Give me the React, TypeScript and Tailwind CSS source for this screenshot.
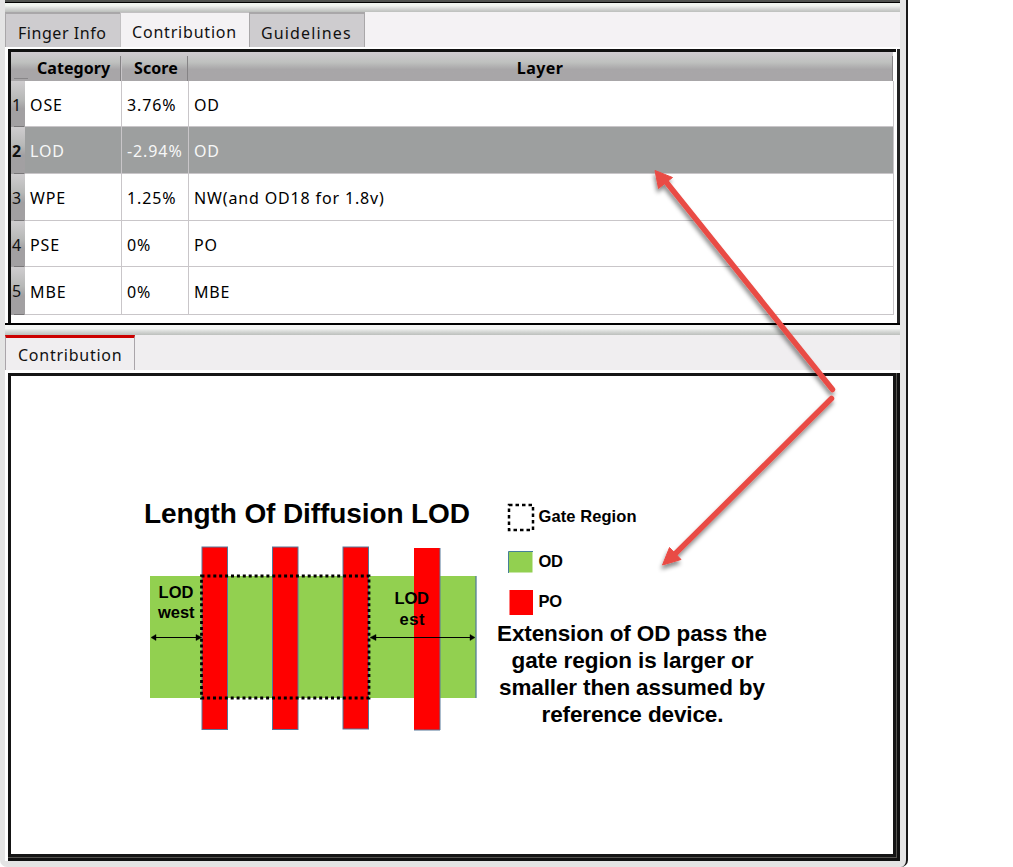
import React from "react";

type Row = { id: number; category: string; score: string; layer: string };

const rows: Row[] = [
  { id: 1, category: "OSE", score: "3.76%", layer: "OD" },
  { id: 2, category: "LOD", score: "-2.94%", layer: "OD" },
  { id: 3, category: "WPE", score: "1.25%", layer: "NW(and OD18 for 1.8v)" },
  { id: 4, category: "PSE", score: "0%", layer: "PO" },
  { id: 5, category: "MBE", score: "0%", layer: "MBE" },
];

const heights = ["h-[46px]", "h-[47px]", "h-[47px]", "h-[46px]", "h-[48px]"];

function Splitter() {
  return <div className="h-[6px] bg-linear-to-b from-[#edefed] via-[#d3d5d3] to-[#bcbfbc]" />;
}

function TopTabs() {
  return (
    <div className="flex h-[35px] bg-[#f4f2f4] text-[16px] leading-[22px]">
      <div className="w-[115px] border-t-2 border-l border-[#a9a7a9] bg-[#cecccf] pt-[8px] pl-[12px] tracking-[0.55px] whitespace-nowrap">Finger Info</div>
      <div className="w-[129px] border-t border-l border-[#c2c0c2] pt-[8px] pl-[11px] tracking-[0.8px]">Contribution</div>
      <div className="w-[116px] border-t-2 border-x border-[#a9a7a9] bg-[#cecccf] pt-[8px] pl-[11px] tracking-[1.15px]">Guidelines</div>
    </div>
  );
}

function HeaderRow() {
  return (
    <div className="flex h-[29px] w-[882px] bg-linear-to-b from-[#d0cbd0] via-[#bfc1bf] via-35% to-[#a8a6a8] to-60% pt-[4px] text-[16px] leading-[25px] font-bold text-black">
      <div className="mr-[-3px] ml-[3px] h-[3px] w-[14px] shrink-0 self-end border-t border-[#888688]" />
      <div className="w-[96px] border-r border-[#858385] pl-[12px] tracking-[0.05px]">Category</div>
      <div className="w-[67px] border-r border-l border-r-[#858385] border-l-[#c8c5c8] pl-[12px] tracking-[0.1px]">Score</div>
      <div className="w-[705px] border-r border-[#858385] text-center tracking-[0.4px]">Layer</div>
    </div>
  );
}

function TableRow({ row, height, active }: { row: Row; height: string; active: boolean }) {
  return (
    <div className={`flex ${height} items-center text-[16px] ${active ? "text-[#f7f7f7]" : "text-black"}`}>
      <div className="flex h-full w-[14px] flex-col bg-linear-to-b from-[#cfcdcf] via-[#b7b8b7] via-40% to-[#a2a0a2] to-60%">
        <div className={`grow pt-[13px] pl-px leading-[22px] text-[#111] ${active ? "font-bold" : ""}`}>{row.id}</div>
        <div className="ml-[3px] h-px w-[10px] bg-[#777577]" />
      </div>
      <div className={`flex h-full w-[97px] items-center border-r border-b border-[#c9c6c9] pt-[2px] pl-[5px] tracking-[0.9px] ${active ? "bg-[#9d9f9f]" : "bg-white"}`}>{row.category}</div>
      <div className={`flex h-full w-[67px] items-center border-r border-b border-[#c9c6c9] pt-[2px] pl-[5px] tracking-[0.9px] ${active ? "bg-[#9d9f9f] pl-[4px]" : "bg-white pl-[5px]"}`}>{row.score}</div>
      <div className={`flex h-full w-[705px] items-center border-r border-b border-[#c9c6c9] pt-[2px] pl-[5px] tracking-[0.85px] ${active ? "bg-[#9d9f9f]" : "bg-white"}`}>{row.layer}</div>
    </div>
  );
}

function DiffusionDiagram() {
  return (
    <svg width="883" height="478" viewBox="11 376 883 478" className="block" fontFamily="'Liberation Sans', Arial, sans-serif" fontWeight="bold" fill="#000">
      <text x="144" y="523" fontSize="28" textLength="326">Length Of Diffusion LOD</text>
      <rect x="150" y="576" width="326" height="122" fill="#92d050" />
      <path d="M476 576V698" stroke="#557f96" strokeWidth="1.3" />
      <g fill="#ff0000">
        <rect x="202" y="547" width="25.5" height="182.5" stroke="#56789a" />
        <rect x="272.5" y="547" width="25.5" height="182.5" stroke="#56789a" />
        <rect x="343" y="547" width="25.5" height="182" stroke="#56789a" />
        <rect x="414" y="548" width="26" height="182" />
      </g>
      <path d="M440 548V730H414" fill="none" stroke="#56789a" />
      <rect x="201.5" y="576" width="167.5" height="122" fill="none" stroke="#000" strokeWidth="2.8" strokeDasharray="3 2.9" />
      <g stroke="#000" strokeWidth="1.1">
        <path d="M153 637.5H200M371 637.5H474" />
        <path d="M151 637.5l5-3v6zM202 637.5l-6-3v6zM370 637.5l6-3v6zM475 637.5l-5-3v6z" strokeWidth="0.4" />
      </g>
      <g fontSize="16.5">
        <text x="158.5" y="598" textLength="35">LOD</text>
        <text x="158" y="618" textLength="36.5">west</text>
        <text x="394.5" y="604" textLength="34.5">LOD</text>
        <text x="399.5" y="625" textLength="25">est</text>
      </g>
      <rect x="509" y="505" width="24" height="25" fill="none" stroke="#000" strokeWidth="2.5" strokeDasharray="3.5 3" />
      <rect x="508.5" y="551.5" width="24" height="21" fill="#92d050" />
      <path d="M508.5 573V551.5H533" fill="none" stroke="#467f99" />
      <rect x="509.5" y="590" width="23.5" height="25" fill="#ff0000" />
      <g fontSize="16.5">
        <text x="538.5" y="521.5" textLength="98">Gate Region</text>
        <text x="538.5" y="566.5" textLength="24.500">OD</text>
        <text x="538.5" y="606.5" textLength="23.500">PO</text>
      </g>
      <g fontSize="22.5">
        <text x="497" y="641" textLength="270">Extension of OD pass the</text>
        <text x="511.5" y="668" textLength="242">gate region is larger or</text>
        <text x="499" y="695" textLength="266">smaller then assumed by</text>
        <text x="541.5" y="722" textLength="182">reference device.</text>
      </g>
    </svg>
  );
}

function CalloutArrows() {
  return (
    <svg className="pointer-events-none absolute top-0 left-0 h-[867px] w-[1013px]" viewBox="0 0 1013 867">
      <defs>
        <filter id="arrow-shadow" x="-10%" y="-10%" width="120%" height="120%">
          <feDropShadow dx="-1" dy="4" stdDeviation="2.3" floodColor="#000" floodOpacity="0.45" />
        </filter>
      </defs>
      <g filter="url(#arrow-shadow)" fill="#e94b45" stroke="#e94b45">
        <path d="M667 183L832.5 389.5M831.5 398.5L675 554" strokeWidth="5.5" strokeLinecap="round" />
        <path d="M655 170.5L672.5 177.5L658.500 188.500ZM662.500 565L669.500 547.500L681 559.500Z" strokeWidth="1" />
      </g>
    </svg>
  );
}

export default function App() {
  return (
    <div className="relative h-[867px] w-[1013px] overflow-hidden bg-white font-['Noto_Sans','Open_Sans',sans-serif] text-[#111]">
      <div className="flex h-[867px] w-[908px] flex-col rounded-b-[7px] border-r-2 border-[#171717] bg-[#e4e4e4] pr-[6px] pl-[5px]">
        <div className="h-[3px] shrink-0 border-b border-black bg-[#50524f]" />
        <div className="h-[3px] shrink-0 bg-[#f0f4ef]" />
        <Splitter />
        <TopTabs />
        <div className="flex h-[278px] flex-col bg-white pt-[2px]">
          <div className="flex h-[274px] border-r-[3px] border-[#222] pl-[3px]">
            <div className="mr-[1px] w-[888px] shrink-0 border-t-[3px] border-l-[3px] border-[#111] bg-white">
              <HeaderRow />
              {rows.map((row, index) => (
                <TableRow key={row.id} row={row} height={heights[index]} active={row.id === 2} />
              ))}
            </div>
          </div>
          <div className="h-[2px] bg-black" />
        </div>
        <div className="h-[4px] bg-[#f4f5f4]" />
        <Splitter />
        <div className="flex h-[35px] bg-[#f0eef0]">
          <div className="w-[130px] border-x border-t-[3px] border-x-[#aaa5aa] border-t-[#cc0000] pt-[6px] pl-[12px] text-[16px] leading-[22px] tracking-[0.75px]">Contribution</div>
        </div>
        <div className="h-[3px] bg-white" />
        <div className="flex h-[488px] bg-white pl-[3px]">
          <div className="h-[488px] w-[892px] border-r-[3px] border-b-[3px] border-[#111] bg-[#555450]">
            <div className="h-[484px] w-[888px] border-t-[3px] border-r-[3px] border-b-[3px] border-l-[3px] border-[#151515] bg-white">
              <DiffusionDiagram />
            </div>
          </div>
        </div>
      </div>
      <CalloutArrows />
    </div>
  );
}
